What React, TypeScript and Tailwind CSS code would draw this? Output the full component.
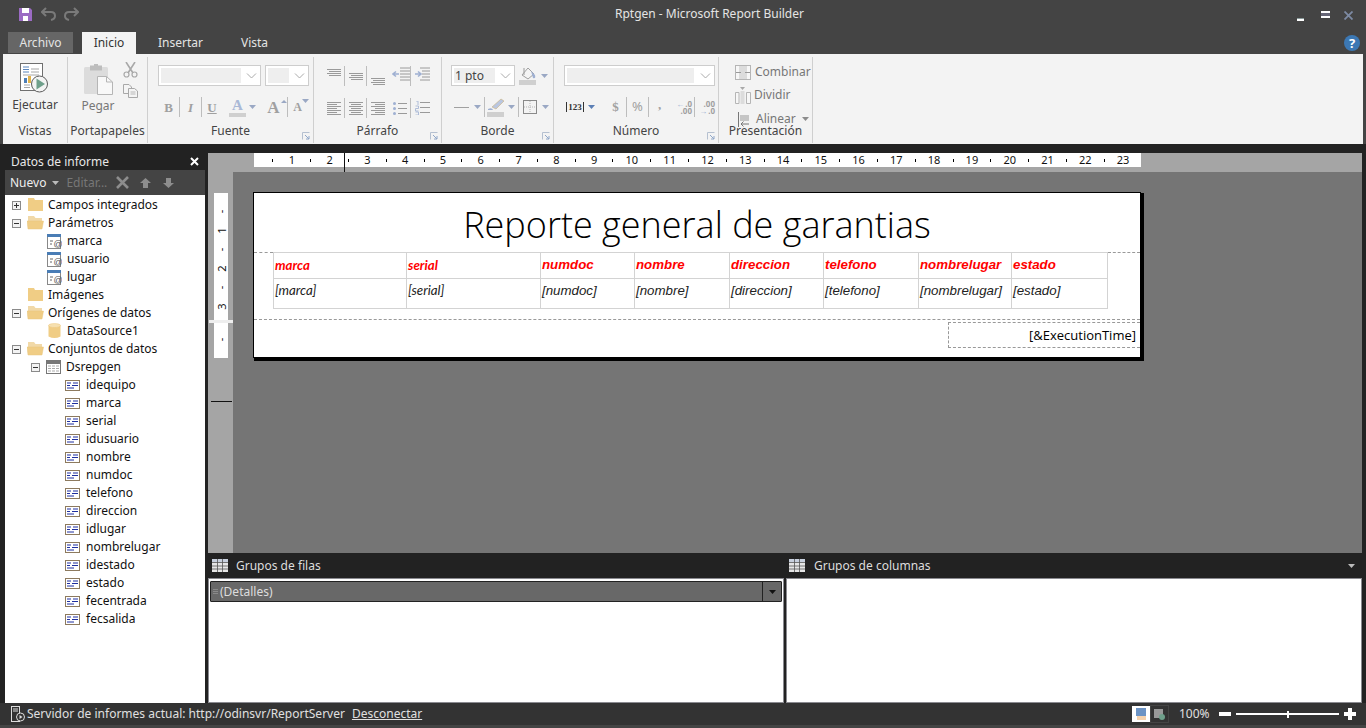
import React from "react"

const ui = "font-['Noto_Sans','Open_Sans',sans-serif]"

function Chevron() {
  return (
    <svg width="11" height="6" viewBox="0 0 11 6" className="shrink-0">
      <path d="M1 0.5 L5.5 5 L10 0.5" fill="none" stroke="#aaa" strokeWidth="1" />
    </svg>
  )
}

function Arrow({ color = "#9aa8c4" }: { color?: string }) {
  return (
    <svg width="7" height="4" viewBox="0 0 7 4" className="shrink-0">
      <path d="M0 0 H7 L3.5 4 Z" fill={color} />
    </svg>
  )
}

function Sep({ h = "h-[20px]", cls = "" }: { h?: string; cls?: string }) {
  return <div className={`w-px bg-[#bdbdbd] shrink-0 ${h} ${cls}`} />
}

function Lines({ align, short = false }: { align: "l" | "c" | "r"; short?: boolean }) {
  const rows = short ? [0, 2, 4, 6] : [0, 2, 4, 6, 8, 10, 12]
  return (
    <svg width="14" height={short ? 7 : 13} className="shrink-0">
      {rows.map((y, i) => {
        const w = i % 2 === 0 ? 14 : 10
        const x = align === "l" ? 0 : align === "c" ? (14 - w) / 2 : 14 - w
        return <rect key={y} x={x} y={y} width={short ? (i % 2 === 0 ? 14 : 12) : w} height="1" fill="#9a9a9a" />
      })}
    </svg>
  )
}

function Launcher() {
  return (
    <svg width="8" height="8" viewBox="0 0 8 8" className="absolute right-[3px] bottom-[3px]">
      <path d="M0.5 7.5 V0.5 H7.5" fill="none" stroke="#b5c0d0" />
      <path d="M3 3 L7 7 M7 4 V7 H4" fill="none" stroke="#8fa6c8" />
    </svg>
  )
}

function Group({ w, label, launcher, children }: { w: string; label: string; launcher?: boolean; children: React.ReactNode }) {
  return (
    <div className={`${w} mt-[3px] h-[86px] shrink-0 border-r border-[#cfcfcf] flex flex-col relative`}>
      <div className="flex-1 min-h-0">{children}</div>
      <div className="h-[18px] mb-[3px] text-center text-[12px] leading-[18px] text-[#444]">{label}</div>
      {launcher && <Launcher />}
    </div>
  )
}

function Combo({ w, inner, children }: { w: string; inner: string; children?: React.ReactNode }) {
  return (
    <div className={`${w} h-[21px] shrink-0 bg-white border border-[#cdcdcd] flex items-center pl-[2px] pr-[3px] justify-between`}>
      <div className={`${inner} h-[15px] bg-[#eeeeee] text-[12px] leading-[15px] text-[#666]`}>{children}</div>
      <Chevron />
    </div>
  )
}

function RunIcon() {
  return (
    <svg width="30" height="31" viewBox="0 0 30 31" className="shrink-0">
      <rect x="0.5" y="0.5" width="22" height="27" fill="#fff" stroke="#6f6f6f" />
      <path d="M3 4 H9 M3 6.5 H9 M3 9 H9" stroke="#5b86bd" />
      <path d="M11 6 H19 M11 9 H19 M3 12 H19" stroke="#a6a6a6" />
      <rect x="4" y="15" width="3" height="5" fill="#4e7fb7" />
      <rect x="8" y="13" width="3" height="7" fill="#e2b34a" />
      <path d="M4 22 H10 M4 24.5 H10" stroke="#a6a6a6" />
      <circle cx="19.5" cy="21" r="8" fill="#f4f4f4" stroke="#5b5b5b" />
      <path d="M16.5 15.5 L25 21 L16.5 26.5 Z" fill="#6fa08b" />
    </svg>
  )
}

function PasteIcon() {
  return (
    <svg width="29" height="31" viewBox="0 0 29 31" className="shrink-0">
      <rect x="0" y="3" width="24" height="27" rx="1.5" fill="#dcdcdc" />
      <rect x="6" y="1.5" width="12" height="5" fill="#bdbdbd" />
      <rect x="10" y="0" width="4" height="3" fill="#bdbdbd" />
      <path d="M13.5 12.5 H22.5 L28.5 18 V30.5 H13.5 Z" fill="#f8f8f8" stroke="#b5b5b5" />
      <path d="M22.5 12.5 V18 H28.5" fill="none" stroke="#b5b5b5" />
    </svg>
  )
}

function ScissorsIcon() {
  return (
    <svg width="15" height="16" viewBox="0 0 15 16" className="shrink-0">
      <path d="M3 0 L10 11 M12 0 L5 11" stroke="#a8a8a8" strokeWidth="1.6" fill="none" />
      <circle cx="3.5" cy="12.5" r="2.5" fill="none" stroke="#a8a8a8" strokeWidth="1.2" />
      <circle cx="11.5" cy="12.5" r="2.5" fill="none" stroke="#a8a8a8" strokeWidth="1.2" />
    </svg>
  )
}

function CopyIcon() {
  return (
    <svg width="15" height="14" viewBox="0 0 15 14" className="shrink-0">
      <path d="M0.5 0.5 H6 L8.5 3 V9.5 H0.5 Z" fill="#f4f4f4" stroke="#a8a8a8" />
      <path d="M5.5 4.5 H11.5 L14.5 7 V13.5 H5.5 Z" fill="#f4f4f4" stroke="#a8a8a8" />
      <path d="M7.5 8 H12.5 M7.5 10 H12.5" stroke="#b8b8b8" />
    </svg>
  )
}

function RibbonGlyph({ children, cls = "" }: { children: React.ReactNode; cls?: string }) {
  return <span className={`font-['Liberation_Serif',serif] font-bold text-[#a0a0a0] leading-none ${cls}`}>{children}</span>
}

function Ribbon() {
  return (
    <div className={`h-[90px] mx-[3px] bg-[#f3f3f3] flex ${ui}`}>
      <Group w="w-[65px]" label="Vistas">
        <div className="flex flex-col items-center pt-[6px]">
          <RunIcon />
          <div className="mt-[3px] text-[12px] leading-[16px] text-[#444]">Ejecutar</div>
        </div>
      </Group>

      <Group w="w-[80px]" label="Portapapeles">
        <div className="flex pl-[15px] pt-[7px]">
          <div className="flex flex-col items-center w-[30px]">
            <PasteIcon />
            <div className="mt-[3px] text-[12px] leading-[16px] text-[#777]">Pegar</div>
          </div>
          <div className="flex flex-col ml-[10px] gap-[6px] -mt-[2px]">
            <ScissorsIcon />
            <CopyIcon />
          </div>
        </div>
      </Group>

      <Group w="w-[166px]" label="Fuente" launcher>
        <div className="pl-[10px] pt-[8px] flex flex-col">
          <div className="flex gap-[4px]">
            <Combo w="w-[103px]" inner="w-[80px]" />
            <Combo w="w-[44px]" inner="w-[21px]" />
          </div>
          <div className="flex items-center mt-[11px] h-[20px] text-[#a0a0a0]">
            <RibbonGlyph cls="text-[13px] w-[21px] text-center">B</RibbonGlyph>
            <Sep />
            <RibbonGlyph cls="text-[13px] w-[21px] text-center italic">I</RibbonGlyph>
            <Sep />
            <RibbonGlyph cls="text-[13px] w-[20px] text-center underline">U</RibbonGlyph>
            <div className="w-[17px] ml-[7px] flex flex-col items-center">
              <RibbonGlyph cls="text-[15px] text-[#a9b8d6]">A</RibbonGlyph>
              <div className="w-[17px] h-[4px] bg-[#cfcfcf]" />
            </div>
            <div className="ml-[3px]"><Arrow /></div>
            <RibbonGlyph cls="text-[17px] ml-[10px] w-[15px] text-center">A</RibbonGlyph>
            <div className="w-[5px] -mt-[12px]"><svg width="6" height="3"><path d="M0 3 L3 0 L6 3 Z" fill="#9aa8c4" /></svg></div>
            <Sep cls="ml-[1px]" />
            <RibbonGlyph cls="text-[12px] ml-[5px] w-[9px] text-center">A</RibbonGlyph>
            <div className="-mt-[12px]"><Arrow /></div>
          </div>
        </div>
      </Group>

      <Group w="w-[128px]" label="Párrafo" launcher>
        <div className="pl-[13px] flex flex-col">
          <div className="flex h-[32px] items-start pt-[9px]">
            <div className="w-[17px] mt-[3px]"><Lines align="c" short /></div>
            <Sep cls="mt-0" />
            <div className="w-[21px] pl-[4px] mt-[7px]"><Lines align="c" short /></div>
            <Sep />
            <div className="w-[24px] pl-[4px] mt-[12px]"><Lines align="c" short /></div>
            <svg width="18" height="17" viewBox="0 0 18 17" className="shrink-0 ml-[1px] mt-[1px]">
              <path d="M8 1 H18 M8 4 H18 M8 7 H18 M8 10 H18 M8 13 H18" stroke="#9a9a9a" />
              <path d="M7 7 H2 M4 4.5 L1 7 L4 9.5" fill="none" stroke="#9fb0d2" strokeWidth="1.6" />
            </svg>
            <Sep cls="ml-[0px]" />
            <svg width="17" height="17" viewBox="0 0 17 17" className="shrink-0 ml-[3px] mt-[1px]">
              <path d="M6 1 H16 M8 4 H16 M8 7 H16 M8 10 H16 M6 13 H16" stroke="#9a9a9a" />
              <path d="M1 7 H6 M4 4.5 L7 7 L4 9.5" fill="none" stroke="#9fb0d2" strokeWidth="1.6" />
            </svg>
          </div>
          <div className="flex items-center h-[20px] mt-[9px]">
            <div className="w-[17px]"><Lines align="l" /></div>
            <Sep />
            <div className="w-[21px] pl-[4px]"><Lines align="c" /></div>
            <Sep />
            <div className="w-[26px] pl-[4px]"><Lines align="r" /></div>
            <svg width="14" height="13" viewBox="0 0 14 13" className="shrink-0">
              <path d="M5 1.5 H14 M5 6.5 H14 M5 11.5 H14" stroke="#9a9a9a" />
              <circle cx="1.5" cy="1.5" r="1.5" fill="#9fb0d2" />
              <circle cx="1.5" cy="6.5" r="1.5" fill="#9fb0d2" />
              <circle cx="1.5" cy="11.5" r="1.5" fill="#9fb0d2" />
            </svg>
            <Sep cls="ml-[3px]" />
            <svg width="15" height="14" viewBox="0 0 15 14" className="shrink-0 ml-[4px]">
              <path d="M5 1.5 H15 M5 6.5 H15 M5 11.5 H15" stroke="#9a9a9a" />
              <path d="M1 0 H3 V4 M0.5 5 H3.5 V7.5 H0.5 V10 H3.5 M0.5 11 H3.5 V14 H0.5" fill="none" stroke="#9fb0d2" strokeWidth="0.8" />
            </svg>
          </div>
        </div>
      </Group>

      <Group w="w-[112px]" label="Borde" launcher>
        <div className="pl-[9px] pt-[8px] flex flex-col">
          <div className="flex items-center h-[21px]">
            <Combo w="w-[64px]" inner="w-[41px]"><span className="pl-[1px] text-[#444]">1 pto</span></Combo>
            <svg width="18" height="19" viewBox="0 0 18 19" className="shrink-0 ml-[4px]">
              <path d="M3 9 L9 2 L15 8 L9 13 Z" fill="#f4f4f4" stroke="#a0a0a0" />
              <path d="M5 2 V9" stroke="#9a9a9a" />
              <path d="M12 5 L16 9 Q17 13 14 12 Z" fill="#9fb0d2" />
              <rect x="0" y="14" width="17" height="5" fill="#cfcfcf" />
            </svg>
            <div className="ml-[4px]"><Arrow /></div>
          </div>
          <div className="flex items-center h-[20px] mt-[11px]">
            <div className="w-[15px] h-px bg-[#a0a0a0] ml-[3px]" />
            <div className="ml-[5px]"><Arrow /></div>
            <Sep cls="ml-[3px]" />
            <svg width="18" height="19" viewBox="0 0 18 19" className="shrink-0 ml-[2px]">
              <path d="M5 9 L14 1 L17 3 L9 11 Z" fill="#b9c6e0" stroke="#c9a86b" strokeWidth="0.5" />
              <path d="M1 11 Q5 9 6 12 L1 12 Z" fill="#9fb0d2" />
              <rect x="0" y="14" width="17" height="5" fill="#cfcfcf" />
            </svg>
            <div className="ml-[3px]"><Arrow /></div>
            <Sep cls="ml-[3px]" />
            <svg width="14" height="14" viewBox="0 0 14 14" className="shrink-0 ml-[4px]">
              <rect x="0.5" y="0.5" width="13" height="13" fill="none" stroke="#8a8a8a" />
              <path d="M7 1 V13 M1 7 H13" stroke="#b5b5b5" strokeDasharray="1 1" />
            </svg>
            <div className="ml-[5px]"><Arrow /></div>
          </div>
        </div>
      </Group>

      <Group w="w-[165px]" label="Número" launcher>
        <div className="pl-[10px] pt-[8px] flex flex-col">
          <Combo w="w-[151px]" inner="w-[127px]" />
          <div className="flex items-center h-[20px] mt-[11px] text-[#a0a0a0]">
            <div className="w-[18px] ml-[2px] h-[10px] border-x border-[#333] text-[9px] leading-[10px] font-bold text-center text-[#333] font-['Liberation_Serif',serif]">123</div>
            <div className="ml-[4px]"><Arrow color="#5b7fb5" /></div>
            <div className="w-[21px] ml-[10px] text-center text-[13px] font-['Liberation_Serif',serif] font-bold">$</div>
            <Sep />
            <div className="w-[21px] text-center text-[13px]">%</div>
            <Sep />
            <div className="w-[21px] text-center text-[13px] font-bold font-['Liberation_Serif',serif] -mt-[4px]">,</div>
            <div className="ml-[5px] w-[17px] flex flex-col items-end text-[8px] leading-[7px] font-bold">
              <div className="flex items-center"><span className="text-[#9fb0d2] mr-[1px]">←</span>.0</div>
              <div>.00</div>
            </div>
            <Sep cls="ml-[2px]" />
            <div className="ml-[3px] w-[17px] flex flex-col items-end text-[8px] leading-[7px] font-bold">
              <div>.00</div>
              <div className="flex items-center"><span className="text-[#9fb0d2] mr-[1px]">→</span>.0</div>
            </div>
          </div>
        </div>
      </Group>

      <Group w="w-[94px]" label="Presentación">
        <div className="pl-[16px] pt-[5px] flex flex-col text-[12px] text-[#777] leading-[16px]">
          <div className="flex items-center h-[20px]">
            <svg width="16" height="15" viewBox="0 0 16 15" className="shrink-0">
              <rect x="0.5" y="0.5" width="15" height="14" fill="#f7f7f7" stroke="#b5b5b5" />
              <rect x="4" y="1" width="8" height="13" fill="#dcdcdc" />
              <path d="M1 7.5 H6 M15 7.5 H10" stroke="#9a9a9a" />
            </svg>
            <span className="ml-[4px]">Combinar</span>
          </div>
          <div className="flex items-center h-[24px] mt-[1px]">
            <svg width="16" height="17" viewBox="0 0 16 17" className="shrink-0">
              <path d="M0.5 5.5 H4 V16.5 H0.5 Z M11.5 5.5 H15.5 V16.5 H11.5 Z" fill="#f7f7f7" stroke="#b5b5b5" />
              <rect x="5.5" y="4" width="4" height="13" fill="#dcdcdc" />
              <path d="M5 0 H10 L7.5 3 Z" fill="#a8a8a8" />
            </svg>
            <span className="ml-[3px]">Dividir</span>
          </div>
          <div className="flex items-center h-[24px]">
            <svg width="12" height="15" viewBox="0 0 12 15" className="shrink-0 ml-[3px]">
              <path d="M0.5 0 V15" stroke="#777" />
              <rect x="2" y="3" width="9" height="6" fill="#c5c5c5" />
              <path d="M11 12 H3 M5.5 9.5 L3 12 L5.5 14.5" fill="none" stroke="#777" />
            </svg>
            <span className="ml-[6px]">Alinear</span>
            <div className="ml-[6px]"><Arrow color="#8c8c8c" /></div>
          </div>
        </div>
      </Group>
    </div>
  )
}

function Folder({ open }: { open?: boolean }) {
  return (
    <svg width="17" height="14" viewBox="0 0 17 14" className="shrink-0">
      {open ? (
        <>
          <path d="M1 0 H7 L8.5 2 H15 V5 H1 Z" fill="#f1d9a8" />
          <path d="M1 13 L0 5 H16.5 L15 13 Z" fill="#f0cd85" stroke="#e8c67f" strokeWidth="0.5" />
        </>
      ) : (
        <>
          <path d="M1 0 H7 L8 2 H16 V13 H1 Z" fill="#f0cd85" />
        </>
      )}
    </svg>
  )
}

function ParamIcon() {
  return (
    <svg width="15" height="15" viewBox="0 0 15 15" className="shrink-0">
      <rect x="0.5" y="0.5" width="13" height="14" fill="#fff" stroke="#888" />
      <rect x="0" y="0" width="14" height="3" fill="#4a7db5" />
      <path d="M3 7 H6 M3 10 H5" stroke="#666" />
      <text x="6.5" y="13" fontSize="9" fontFamily="Liberation Sans" fill="#555">@</text>
    </svg>
  )
}

function CylinderIcon() {
  return (
    <svg width="13" height="16" viewBox="0 0 13 16" className="shrink-0">
      <path d="M0.5 2.5 V13.5 Q6.5 16.5 12.5 13.5 V2.5 Z" fill="#f0cd85" />
      <ellipse cx="6.5" cy="2.5" rx="6" ry="2" fill="#f6e0b0" stroke="#ecc67c" strokeWidth="0.5" />
    </svg>
  )
}

function TableIcon() {
  return (
    <svg width="15" height="14" viewBox="0 0 15 14" className="shrink-0">
      <rect x="0.5" y="0.5" width="14" height="13" fill="#fff" stroke="#777" />
      <rect x="1" y="1" width="13" height="3" fill="#777" />
      <path d="M2 6 H13 M2 8.5 H13 M2 11 H13" stroke="#aaa" strokeDasharray="3 1" />
    </svg>
  )
}

function FieldIcon() {
  return (
    <svg width="15" height="11" viewBox="0 0 15 11" className="shrink-0">
      <rect x="0.5" y="0.5" width="14" height="10" fill="#fff" stroke="#8d7a5e" />
      <path d="M2 3 H6 M8 3 H13 M2 5.5 H5 M7 5.5 H13 M2 8 H9" stroke="#1f2fa0" />
    </svg>
  )
}

function Box({ open }: { open?: boolean }) {
  return (
    <div className="w-[9px] h-[9px] shrink-0 bg-[#f3f3f3] border border-[#8a8a8a] flex items-center justify-center relative">
      <div className="w-[5px] h-px bg-[#333]" />
      {!open && <div className="absolute w-px h-[5px] bg-[#333]" />}
    </div>
  )
}

function TreeRow({ indent, box, icon, gap, children }: { indent: string; box?: React.ReactNode; icon: React.ReactNode; gap: string; children: string }) {
  return (
    <div className={`h-[18px] flex items-center ${indent}`}>
      {box}
      {icon}
      <span className={`${gap} text-[12px] leading-[18px] text-[#111] whitespace-nowrap`}>{children}</span>
    </div>
  )
}

const fields = ["idequipo", "marca", "serial", "idusuario", "nombre", "numdoc", "telefono", "direccion", "idlugar", "nombrelugar", "idestado", "estado", "fecentrada", "fecsalida"]

function DataPanel() {
  return (
    <div className={`w-[200px] shrink-0 flex flex-col ${ui}`}>
      <div className="h-[17px] flex items-center justify-between pl-[6px] pr-[6px] text-[12px] text-[#e8e8e8]">
        <span>Datos de informe</span>
        <svg width="9" height="9" viewBox="0 0 9 9"><path d="M1 1 L8 8 M8 1 L1 8" stroke="#fff" strokeWidth="2" /></svg>
      </div>
      <div className="h-[25px] bg-[#444] flex items-center pl-[5px] text-[12px]">
        <span className="text-[#eee]">Nuevo</span>
        <div className="ml-[6px]"><Arrow color="#bbb" /></div>
        <span className="ml-[7px] text-[#777]">Editar...</span>
        <svg width="13" height="13" viewBox="0 0 13 13" className="ml-[9px]"><path d="M1 1 L12 12 M12 1 L1 12" stroke="#8d8d8d" strokeWidth="2.6" /></svg>
        <svg width="11" height="10" viewBox="0 0 11 10" className="ml-[11px]"><path d="M5.5 0 L11 5 H8 V10 H3 V5 H0 Z" fill="#8d8d8d" /></svg>
        <svg width="11" height="10" viewBox="0 0 11 10" className="ml-[12px]"><path d="M5.5 10 L11 5 H8 V0 H3 V5 H0 Z" fill="#8d8d8d" /></svg>
      </div>
      <div className="flex-1 bg-white pt-px">
        <TreeRow indent="pl-[7px]" box={<Box />} icon={<div className="ml-[6px]"><Folder /></div>} gap="ml-[4px]">Campos integrados</TreeRow>
        <TreeRow indent="pl-[7px]" box={<Box open />} icon={<div className="ml-[6px]"><Folder open /></div>} gap="ml-[4px]">Parámetros</TreeRow>
        {["marca", "usuario", "lugar"].map((p) => (
          <TreeRow key={p} indent="pl-[42px]" icon={<ParamIcon />} gap="ml-[5px]">{p}</TreeRow>
        ))}
        <TreeRow indent="pl-[22px]" icon={<Folder />} gap="ml-[4px]">Imágenes</TreeRow>
        <TreeRow indent="pl-[7px]" box={<Box open />} icon={<div className="ml-[6px]"><Folder open /></div>} gap="ml-[4px]">Orígenes de datos</TreeRow>
        <TreeRow indent="pl-[43px]" icon={<CylinderIcon />} gap="ml-[6px]">DataSource1</TreeRow>
        <TreeRow indent="pl-[7px]" box={<Box open />} icon={<div className="ml-[6px]"><Folder open /></div>} gap="ml-[4px]">Conjuntos de datos</TreeRow>
        <TreeRow indent="pl-[26px]" box={<Box open />} icon={<div className="ml-[6px]"><TableIcon /></div>} gap="ml-[5px]">Dsrepgen</TreeRow>
        {fields.map((f) => (
          <TreeRow key={f} indent="pl-[60px]" icon={<FieldIcon />} gap="ml-[6px]">{f}</TreeRow>
        ))}
      </div>
    </div>
  )
}

function HRuler() {
  const cells: React.ReactNode[] = []
  for (let n = 1; n <= 23; n++) {
    cells.push(
      <div key={`t${n}`} className="w-[18.9px] shrink-0 flex justify-center"><div className="w-px h-[3px] bg-black" /></div>,
      <div key={`n${n}`} className="w-[18.9px] shrink-0 text-center">{n}</div>
    )
  }
  return (
    <div className="h-[19px] bg-[#a5a5a5] pl-[46px] relative">
      <div className={`w-[887px] h-[14px] bg-white flex items-center pl-[9.5px] text-[11px] leading-[14px] text-[#111] ${ui}`}>{cells}</div>
      <div className="absolute left-[136px] top-0 w-px h-[19px] bg-[#111]" />
    </div>
  )
}

function VRuler() {
  const marks = ["-", "1", "-", "2", "-", "3"]
  return (
    <div className={`w-[25px] shrink-0 bg-[#a5a5a5] pl-[6px] pt-[21px] relative ${ui}`}>
      <div className="w-[14px] h-[165px] bg-white flex flex-col items-center pt-[9px] text-[11px] text-[#111]">
        {marks.map((m, i) => (
          <div key={i} className="h-[19px] leading-[19px] -rotate-90">{m}</div>
        ))}
        <div className="h-[19px] mt-[14px] leading-[19px] -rotate-90">-</div>
      </div>
      <div className="absolute left-px right-0 top-[148px] h-[3px] bg-[#eeeeee]" />
      <div className="absolute left-[3px] right-px top-[229px] h-px bg-[#111]" />
    </div>
  )
}

const cols = [
  { k: "marca", w: "w-[133px]", f: "font-['Lato',sans-serif]" },
  { k: "serial", w: "w-[134px]", f: "font-['Lato',sans-serif]" },
  { k: "numdoc", w: "w-[94px]", f: "" },
  { k: "nombre", w: "w-[95px]", f: "" },
  { k: "direccion", w: "w-[94px]", f: "" },
  { k: "telefono", w: "w-[95px]", f: "" },
  { k: "nombrelugar", w: "w-[93px]", f: "" },
  { k: "estado", w: "w-[95px]", f: "" },
]

function ReportPage() {
  return (
    <div className="w-[888px] h-[166px] bg-white border border-black shadow-[2px_2px_0_1px_#000] font-['Liberation_Sans',sans-serif]">
      <div className="h-[59px] flex items-center justify-center font-['Open_Sans',sans-serif] font-light text-[36px] text-black pt-[4px] whitespace-nowrap">
        Reporte general de garantias
      </div>
      <div className="h-[68px] flex items-start border-b border-dashed border-[#999] relative">
        <div className="w-[19px] shrink-0 border-t border-dashed border-[#999]" />
        <div className="border border-[#d3d3d3] flex flex-col shrink-0">
          <div className="flex h-[26px] border-b border-[#d3d3d3]">
            {cols.map((c, i) => (
              <div key={c.k} className={`${c.w} shrink-0 pl-[1px] text-[13.3px] leading-[24px] font-bold italic text-[#f00] ${c.f} ${i < cols.length - 1 ? "border-r border-[#d3d3d3]" : ""}`}>{c.k}</div>
            ))}
          </div>
          <div className="flex h-[29px]">
            {cols.map((c, i) => (
              <div key={c.k} className={`${c.w} shrink-0 pl-[1px] text-[13.3px] leading-[23px] italic text-[#222] ${c.f} ${i < cols.length - 1 ? "border-r border-[#d3d3d3]" : ""}`}>[{c.k}]</div>
            ))}
          </div>
        </div>
        <div className="flex-1 border-t border-dashed border-[#999]" />
      </div>
      <div className="flex justify-end pt-[2px]">
        <div className="w-[192px] h-[26px] border border-r-0 border-dashed border-[#999] text-right pr-[4px] text-[13px] leading-[24px] text-black font-['Open_Sans',sans-serif]">[&amp;ExecutionTime]</div>
      </div>
    </div>
  )
}

function GridIcon() {
  return (
    <svg width="16" height="13" viewBox="0 0 16 13" className="shrink-0">
      <rect x="0" y="0" width="16" height="13" fill="#e6e6e6" />
      <rect x="0" y="0" width="16" height="3" fill="#c8d0de" />
      <path d="M5.5 0 V13 M10.5 0 V13 M0 3.5 H16 M0 7 H16 M0 10 H16" stroke="#555" strokeWidth="0.8" />
    </svg>
  )
}

function Canvas() {
  return (
    <div className="w-[1154px] shrink-0 flex flex-col">
      <div className="h-[400px] flex flex-col">
        <HRuler />
        <div className="flex-1 flex min-h-0">
          <VRuler />
          <div className="flex-1 bg-[#757575] pl-[20px] pt-[20px]">
            <ReportPage />
          </div>
        </div>
      </div>
      <div className={`h-[25px] flex items-center text-[12px] text-[#ddd] ${ui}`}>
        <div className="w-[578px] flex items-center pl-[4px]">
          <GridIcon />
          <span className="ml-[8px]">Grupos de filas</span>
        </div>
        <div className="flex-1 flex items-center pl-[3px] pr-[7px]">
          <GridIcon />
          <span className="ml-[9px] flex-1">Grupos de columnas</span>
          <Arrow color="#bbb" />
        </div>
      </div>
      <div className="flex-1 flex gap-[2px]">
        <div className="w-[576px] bg-white border border-[#8a8a90] p-px">
          <div className={`h-[21px] mt-px bg-[#686868] border border-[#222] rounded-[1px] flex items-center justify-between pl-[2px] ${ui}`}>
            <div className="flex items-center text-[12px] text-[#ddd]">
              <div className="w-[5px] h-[5px] border-y border-[#8a8a8a] mr-[2px] flex items-center"><div className="w-full h-px bg-[#8a8a8a]" /></div>
              (Detalles)
            </div>
            <div className="w-[19px] h-full border-l border-[#222] flex items-center justify-center"><Arrow color="#111" /></div>
          </div>
        </div>
        <div className="flex-1 bg-white border border-[#8a8a90]" />
      </div>
    </div>
  )
}

function StatusBar() {
  return (
    <div className={`h-[22px] bg-[#333] flex items-center pl-[11px] text-[12px] text-[#e0e0e0] ${ui}`}>
      <svg width="14" height="16" viewBox="0 0 14 16" className="shrink-0">
        <rect x="0.5" y="0.5" width="8" height="15" fill="none" stroke="#ddd" />
        <path d="M2 3 H7 M2 5 H7" stroke="#ddd" />
        <circle cx="9.5" cy="11" r="4" fill="#333" stroke="#ddd" />
        <path d="M8.5 9 L11.5 11 L8.5 13 Z" fill="#ddd" />
      </svg>
      <span className="ml-[2px] whitespace-nowrap">Servidor de informes actual: http://odinsvr/ReportServer</span>
      <span className="ml-[7px] underline">Desconectar</span>
      <div className="ml-auto flex items-center pr-[10px]">
        <div className="w-[18px] h-[16px] bg-white flex items-center justify-center">
          <svg width="11" height="12" viewBox="0 0 11 12">
            <rect width="10" height="8" fill="#6c93c4" />
            <path d="M1 9 H10 M1 11 H10" stroke="#e9a35b" />
          </svg>
        </div>
        <div className="w-[19px] h-[18px] border border-[#444] flex items-center justify-center">
          <svg width="11" height="11" viewBox="0 0 11 11">
            <rect width="9" height="9" fill="#999" />
            <circle cx="8" cy="8" r="3" fill="#6fa08b" />
          </svg>
        </div>
        <span className="ml-[10px] w-[30px]">100%</span>
        <div className="ml-[10px] w-[12px] h-[4px] bg-white" />
        <div className="ml-[5px] w-[103px] h-[2px] bg-white flex justify-center items-center">
          <div className="w-[2px] h-[7px] bg-white" />
        </div>
        <svg width="12" height="12" viewBox="0 0 12 12" className="ml-[5px]"><path d="M4 0 H8 V4 H12 V8 H8 V12 H4 V8 H0 V4 H4 Z" fill="#fff" /></svg>
      </div>
    </div>
  )
}

export default function App() {
  return (
    <div className={`w-[1366px] h-[728px] bg-[#444] overflow-hidden flex flex-col ${ui}`}>
      <div className="h-[31px] flex items-center relative">
        <svg width="13" height="13" viewBox="0 0 13 13" className="ml-[19px] -mt-[3px]">
          <path d="M0 0 H11 L13 2 V13 H0 Z" fill="#9b6bc4" />
          <rect x="3" y="0" width="7" height="5" fill="#fff" />
          <rect x="4" y="8" width="5" height="5" fill="#fff" />
        </svg>
        <svg width="15" height="14" viewBox="0 0 15 14" className="ml-[9px] -mt-[3px]" fill="none" stroke="#7a7a7a" strokeWidth="2">
          <path d="M5 1 L1 5 L5 9 M1 5 H10 Q14 5 14 9 Q14 12 10 13" />
        </svg>
        <svg width="15" height="14" viewBox="0 0 15 14" className="ml-[8px] -mt-[3px]" fill="none" stroke="#7a7a7a" strokeWidth="2">
          <path d="M10 1 L14 5 L10 9 M14 5 H5 Q1 5 1 9 Q1 12 5 13" />
        </svg>
        <div className="absolute left-[615px] top-[5px] text-[12px] leading-[18px] text-[#e4e4e4]">Rptgen - Microsoft Report Builder</div>
        <div className="ml-auto flex items-start pr-[13px]">
          <div className="w-[7px] h-[3px] mt-[7px] bg-white border-t border-[#8a9a9a]" />
          <div className="w-[9px] h-[7px] ml-[17px] border-y-2 border-white bg-[#667]" />
          <svg width="9" height="9" viewBox="0 0 9 9" className="ml-[14px]"><path d="M0.5 0.5 L8.5 8.5 M8.5 0.5 L0.5 8.5" stroke="#7d8aa3" strokeWidth="1.8" /></svg>
        </div>
      </div>
      <div className="h-[23px] flex items-end pl-[8px] text-[12px] relative">
        <div className="w-[65px] h-[21px] mb-px bg-[#666] text-[#e4e4e4] text-center leading-[21px]">Archivo</div>
        <div className="w-[54px] h-[22px] ml-[9px] bg-[#f3f3f3] text-[#333] text-center leading-[22px]">Inicio</div>
        <div className="ml-[22px] h-[22px] leading-[22px] text-[#e4e4e4]">Insertar</div>
        <div className="ml-[38px] h-[22px] leading-[22px] text-[#e4e4e4]">Vista</div>
        <div className="ml-auto mr-[6px] mb-[3px] w-[16px] h-[16px] rounded-full bg-[#3c78b4] text-white text-[13px] font-bold leading-[16px] text-center">?</div>
      </div>
      <Ribbon />
      <div className="h-[559px] bg-[#222] pt-[9px] pl-[5px] flex gap-[3px]">
        <DataPanel />
        <Canvas />
      </div>
      <StatusBar />
    </div>
  )
}
